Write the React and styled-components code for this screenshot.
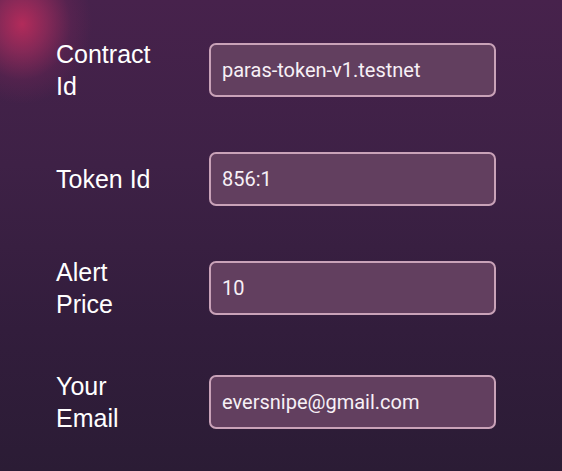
import React from 'react';
import styled, { createGlobalStyle } from 'styled-components';

const GlobalStyle = createGlobalStyle`
  html, body, #root {
    height: 100%;
  }
  body {
    margin: 0;
    background:
      radial-gradient(ellipse 70px 80px at 22px 24px, rgba(190, 44, 92, 0.9) 0, rgba(175, 45, 95, 0.6) 35%, rgba(130, 38, 90, 0.25) 70%, rgba(90, 32, 82, 0) 100%),
      linear-gradient(180deg, #47224c 0%, #3e2146 35%, #321d3c 70%, #2b1c35 100%);
    overflow: hidden;
  }
`;

const Form = styled.form`
  display: flex;
  flex-direction: column;
  gap: 50px;
  padding: 38px 0 0 56px;
`;

const Row = styled.div`
  display: flex;
  align-items: center;
  gap: 53px;
`;

const Label = styled.label`
  width: 100px;
  flex: 0 0 100px;
  color: #ffffff;
  font-family: 'Liberation Sans', Arial, sans-serif;
  font-size: 25px;
  line-height: 32px;
`;

const Input = styled.input`
  box-sizing: border-box;
  width: 287px;
  height: 54px;
  padding: 0 11px;
  border: 2px solid #c9a2b8;
  border-radius: 7px;
  background: #623f5f;
  color: #f7f0f6;
  font-family: Roboto, 'Noto Sans', sans-serif;
  font-size: 20px;
  outline: none;
`;

const fields = [
  { id: 'contract', label: 'Contract Id', value: 'paras-token-v1.testnet' },
  { id: 'token', label: 'Token Id', value: '856:1' },
  { id: 'price', label: 'Alert Price', value: '10' },
  { id: 'email', label: 'Your Email', value: 'eversnipe@gmail.com' },
];

function App() {
  return (
    <>
      <GlobalStyle />
      <Form onSubmit={(e) => e.preventDefault()}>
        {fields.map((f) => (
          <Row key={f.id}>
            <Label htmlFor={f.id}>{f.label}</Label>
            <Input id={f.id} defaultValue={f.value} />
          </Row>
        ))}
      </Form>
    </>
  );
}

export default App;
